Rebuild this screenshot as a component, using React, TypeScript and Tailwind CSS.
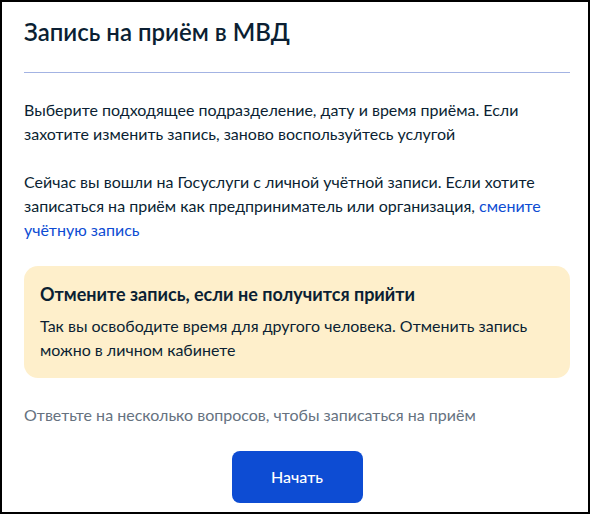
export default function App() {
  return (
    <div
      className="w-[590px] h-[514px] overflow-hidden border-2 border-black bg-white pl-[22px] pr-[18px] pt-[12px] text-[#0b1f33]"
      style={{ fontFamily: 'Lato, "Noto Sans", sans-serif' }}
    >
      <h1 className="text-[24px] leading-[36px] font-semibold">Запись на приём в МВД</h1>
      <div className="mt-[22px] h-px bg-[#a3b3e3]" />

      <p className="mt-[25px] text-[16px] leading-[24px]">
        Выберите подходящее подразделение, дату и время приёма. Если захотите изменить запись, заново воспользуйтесь
        услугой
      </p>
      <p className="mt-[24px] text-[16px] leading-[24px]">
        Сейчас вы вошли на Госуслуги с личной учётной записи. Если хотите записаться на приём как предприниматель или
        организация, <a className="text-[#0d4cd3]">смените учётную запись</a>
      </p>

      <div className="mt-[24px] rounded-[14px] bg-[#feefcb] px-4 pt-4 pb-4">
        <h2 className="text-[18px] leading-[24px] font-bold">Отмените запись, если не получится прийти</h2>
        <p className="mt-2 text-[16px] leading-[24px]">
          Так вы освободите время для другого человека. Отменить запись можно в личном кабинете
        </p>
      </div>

      <p className="mt-[25px] text-[16px] leading-[24px] text-[#66727f]">
        Ответьте на несколько вопросов, чтобы записаться на приём
      </p>

      <div className="mt-[24px] flex justify-center">
        <button className="h-[52px] w-[131px] rounded-lg bg-[#0d4cd3] text-[16px] font-medium text-white">Начать</button>
      </div>
    </div>
  );
}
